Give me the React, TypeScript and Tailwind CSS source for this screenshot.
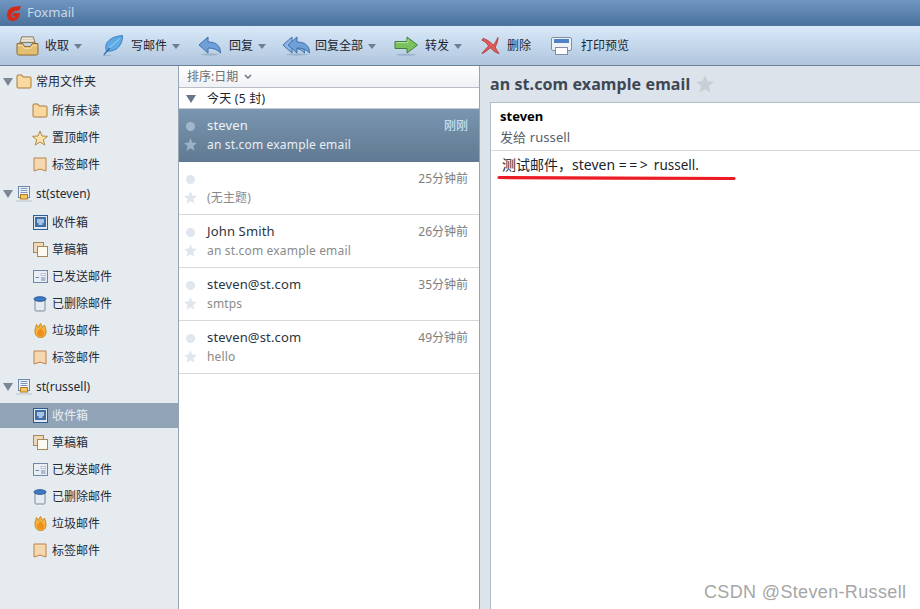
import type { ReactNode } from "react";

const font = { fontFamily: '"Noto Sans", "Noto Sans CJK SC", sans-serif' };

function InboxTrayIcon() {
  return (
    <svg width="23" height="21" viewBox="0 0 24 22">
      <path d="M4 8 L6 2 H18 L20 8Z" fill="#f6f3e8" stroke="#7d6d4a" />
      <path d="M6 4.5 H18 M5 6.5 H19" stroke="#c9c2ac" />
      <path d="M1 9 H7 L9 12 H15 L17 9 H23 V19 Q23 21 21 21 H3 Q1 21 1 19Z" fill="#e3bf74" stroke="#8a6628" />
      <path d="M2 11 H6.5 L8.5 14 H15.5 L17.5 11 H22" stroke="#f4dca6" fill="none" />
    </svg>
  );
}

function FeatherIcon() {
  return (
    <svg width="20" height="21" viewBox="0 0 20 21">
      <path d="M3.5 16 C0.5 8 7 1.5 19.5 0.5 C20 9 14 17.5 3.5 16Z" fill="#5fa9e4" stroke="#3f82c0" />
      <path d="M6 13 C9.5 10 13 7 16.5 4" stroke="#a5d6f5" fill="none" />
      <path d="M1 20 C2.5 17.5 4.5 15.5 7 13" stroke="#2f6ca8" fill="none" strokeWidth="1.3" />
      <path d="M0 20.5 H8" stroke="#9db7d1" />
    </svg>
  );
}

function ReplyIcon({ double }: { double?: boolean }) {
  const arrow = "M10 1 V6 C17 6 22.5 9 22.5 17 C19.5 13.5 15.5 12 10 12 V17 L1 9Z";
  return (
    <svg width={double ? 28 : 24} height="20" viewBox={double ? "0 0 28 20" : "0 0 24 20"}>
      <ellipse cx={double ? 15 : 12} cy="18.5" rx={double ? 11 : 9} ry="1.2" fill="#9db3ca" />
      {double && <path d={arrow} fill="#8fb6e0" stroke="#3d70ad" />}
      <g transform={double ? "translate(5 0)" : undefined}>
        <path d={arrow} fill="#6fa0d8" stroke="#3d70ad" />
      </g>
    </svg>
  );
}

function ForwardIcon() {
  return (
    <svg width="24" height="20" viewBox="0 0 24 20">
      <ellipse cx="12" cy="18.7" rx="10" ry="1" fill="#9db3ca" />
      <path d="M1 5.5 H13 V1 L23.5 9 L13 17 V12.5 H1Z" fill="#7cc15f" stroke="#3f8039" />
      <path d="M2 6.5 H14 V3.5" stroke="#b6e29d" fill="none" />
    </svg>
  );
}

function DeleteIcon() {
  return (
    <svg width="19" height="19" viewBox="0 0 20 19">
      <path d="M2 2 C7 3 11 7 13 9 C15 7 16 4 18 1 C18 5 16 9 15 11 C16 14 18 16 19 18 C15 17 12 14 10 12 C7 14 4 17 1 18 C3 15 6 12 8 10 C6 7 4 5 1 4Z" fill="#e15a55" stroke="#a83532" strokeWidth="0.8" />
    </svg>
  );
}

function PrinterIcon() {
  return (
    <svg width="21" height="18" viewBox="0 0 21 18">
      <rect x=".5" y=".5" width="20" height="13" rx="1.5" fill="#eef2f6" stroke="#7f8fa3" />
      <rect x="3" y="2" width="15" height="4" fill="#4f81c4" />
      <rect x="4.5" y="10.5" width="12" height="7" fill="#fff" stroke="#7f8fa3" />
    </svg>
  );
}

function FolderIcon() {
  return (
    <svg width="16" height="15" viewBox="0 0 16 15">
      <path d="M1 2 Q1 1 2 1 H6 L7 3 H14 Q15 3 15 4 V13 Q15 14 14 14 H2 Q1 14 1 13Z" fill="#fad9a0" stroke="#a87a3c" />
    </svg>
  );
}

function StarIcon() {
  return (
    <svg width="16" height="16" viewBox="0 0 16 16">
      <path d="M8 1 L10 6 L15.5 6.3 L11.3 9.8 L12.8 15 L8 12 L3.2 15 L4.7 9.8 L.5 6.3 L6 6Z" fill="#fbe2a8" stroke="#b08a4a" />
    </svg>
  );
}

function TagIcon() {
  return (
    <svg width="14" height="15" viewBox="0 0 14 15">
      <path d="M1 1 H13 V14 L7 12 L1 14Z" fill="#f5d7b0" stroke="#bd8246" />
    </svg>
  );
}

function AccountIcon() {
  return (
    <svg width="16" height="16" viewBox="0 0 16 16">
      <rect x="2.5" y=".5" width="11" height="11" fill="#eef3f9" stroke="#6a86ab" />
      <path d="M4.5 2.5 H11.5 M4.5 4.5 H11.5 M4.5 6.5 H11.5" stroke="#7d97b8" />
      <rect x="4.5" y="8.5" width="7" height="4.5" fill="#f6c65c" stroke="#b57f26" />
      <path d="M0 15 H16" stroke="#b9c3ce" />
    </svg>
  );
}

function InboxIcon() {
  return (
    <svg width="15" height="15" viewBox="0 0 15 15">
      <rect x=".5" y=".5" width="14" height="14" fill="#dfe7f1" stroke="#2f5d93" />
      <rect x="2" y="2" width="11" height="10" fill="#3f6fa8" />
      <path d="M4 4 H11 V8 H9.5 V10 H5.5 V8 H4Z" fill="#a9c4e3" />
    </svg>
  );
}

function DraftIcon() {
  return (
    <svg width="15" height="15" viewBox="0 0 15 15">
      <rect x=".5" y=".5" width="10" height="10" fill="#efd9b8" stroke="#a98657" />
      <rect x="4.5" y="4.5" width="10" height="10" fill="#fdf9f0" stroke="#a98657" />
    </svg>
  );
}

function SentIcon() {
  return (
    <svg width="15" height="13" viewBox="0 0 15 13">
      <rect x=".5" y=".5" width="14" height="12" fill="#e9eef5" stroke="#6f88aa" />
      <path d="M8 3.5 H12.5 V5.5 H8Z" fill="#fff" stroke="#8aa0bc" strokeWidth=".6" />
      <path d="M2.5 7.5 H6 M8 8 H12.5 M8 10 H12.5" stroke="#6f88aa" />
    </svg>
  );
}

function TrashIcon() {
  return (
    <svg width="14" height="16" viewBox="0 0 14 16">
      <path d="M2 4 V14 Q2 15 3 15 H11 Q12 15 12 14 V4Z" fill="#e6ebf1" stroke="#7d8a99" />
      <ellipse cx="7" cy="3" rx="6" ry="2.3" fill="#3f78c4" stroke="#2a5b9c" />
    </svg>
  );
}

function JunkIcon() {
  return (
    <svg width="13" height="15" viewBox="0 0 13 15">
      <path d="M1 8 C1 5 2 4 2.5 1.5 C3.5 3 4 4 4.5 4.5 C5 3 5.5 1.5 6.5 0.5 C7.5 2 8 3.5 8.5 4.5 C9 4 9.5 3 10.5 2 C11 4 12 6 12 9 C12 12.5 10 14.5 6.5 14.5 C3 14.5 1 12 1 8Z" fill="#f5b53c" stroke="#c98820" />
      <path d="M3 10 C3 8 5 7 6.5 5 C8 7 10 8 10 10 C10 12.5 8.5 13.5 6.5 13.5 C4.5 13.5 3 12.5 3 10Z" fill="#f08f1e" />
    </svg>
  );
}

function Triangle({ className }: { className: string }) {
  return (
    <svg width="10" height="8" viewBox="0 0 10 8" className={className}>
      <path d="M0 0 H10 L5 8Z" fill="currentColor" />
    </svg>
  );
}

function ToolButton({
  icon,
  label,
  caret,
  className,
  gap,
}: {
  icon: ReactNode;
  label: string;
  caret?: boolean;
  className: string;
  gap: string;
}) {
  return (
    <div className={`flex items-center ${className}`}>
      {icon}
      <span className={`${gap} text-[12px] text-[#1c2530]`}>{label}</span>
      {caret && (
        <svg width="8" height="5" viewBox="0 0 8 5" className="ml-[5px] mt-px text-[#6f7f92]">
          <path d="M0 0 H8 L4 5Z" fill="currentColor" />
        </svg>
      )}
    </div>
  );
}

function GroupRow({ icon, label }: { icon: ReactNode; label: string }) {
  return (
    <div className="flex h-[31px] items-center pl-[3px]">
      <Triangle className="text-[#7b8794]" />
      <span className="ml-[1px] flex w-[20px] justify-center">{icon}</span>
      <span className="ml-[2px] text-[12px] text-[#1f2a36]">{label}</span>
    </div>
  );
}

function FolderRow({ icon, label, active }: { icon: ReactNode; label: string; active?: boolean }) {
  return (
    <div className="h-[27px] py-px">
      <div className={`flex h-[25px] items-center pl-[32px] ${active ? "bg-[#91a4b7] text-[#e8eef4]" : "text-[#1f2a36]"}`}>
        <span className="flex w-[16px] justify-center">{icon}</span>
        <span className="ml-[4px] text-[12px]">{label}</span>
      </div>
    </div>
  );
}

const accountFolders = (activeInbox: boolean) => (
  <>
    <FolderRow icon={<InboxIcon />} label="收件箱" active={activeInbox} />
    <FolderRow icon={<DraftIcon />} label="草稿箱" />
    <FolderRow icon={<SentIcon />} label="已发送邮件" />
    <FolderRow icon={<TrashIcon />} label="已删除邮件" />
    <FolderRow icon={<JunkIcon />} label="垃圾邮件" />
    <FolderRow icon={<TagIcon />} label="标签邮件" />
  </>
);

const mails = [
  { from: "steven", subject: "an st.com example email", time: "刚刚", selected: true },
  { from: "", subject: "(无主题)", time: "25分钟前" },
  { from: "John Smith", subject: "an st.com example email", time: "26分钟前" },
  { from: "steven@st.com", subject: "smtps", time: "35分钟前" },
  { from: "steven@st.com", subject: "hello", time: "49分钟前" },
];

function MailRow({ from, subject, time, selected }: { from: string; subject: string; time: string; selected?: boolean }) {
  return (
    <div
      className={`h-[53px] pl-[5px] pr-[11px] pt-[7px] ${
        selected ? "bg-gradient-to-b from-[#7a95b0] to-[#617a92]" : "border-b border-[#d8d8d8] bg-white"
      }`}
    >
      <div className="flex h-[20px] items-center">
        <span className={`ml-[2px] h-[9px] w-[9px] rounded-full ${selected ? "bg-[#a4b7ca]" : "bg-[#dfe6ee]"}`} />
        <span className={`ml-[12px] flex-1 text-[13px] tracking-[0.15px] ${selected ? "text-[#eef3f7]" : "text-[#2b3440]"}`}>{from}</span>
        <span className={`text-[12px] ${selected ? "text-[#dfe9f2]" : "text-[#7d7d7d]"}`}>{time}</span>
      </div>
      <div className="-mt-px flex h-[19px] items-center">
        <svg width="13" height="13" viewBox="0 0 16 16" className={selected ? "text-[#9db1c5]" : "text-[#dfe6ee]"}>
          <path d="M8 0 L10.2 5.6 L16 6 L11.5 9.8 L13 15.8 L8 12.5 L3 15.8 L4.5 9.8 L0 6 L5.8 5.6Z" fill="currentColor" />
        </svg>
        <span className={`ml-[10px] text-[12px] tracking-[0.17px] ${selected ? "text-[#e9eff5]" : "text-[#8a8a8a]"}`}>{subject}</span>
      </div>
    </div>
  );
}

export default function App() {
  return (
    <div className="relative flex h-[609px] w-[920px] flex-col overflow-hidden bg-white" style={font}>
      <header className="flex h-[26px] items-center bg-gradient-to-b from-[#6f97c2] to-[#49719c] pl-[7px]">
        <svg width="14" height="15" viewBox="0 0 14 15">
          <path d="M14 0 L9 .5 C3.5 1 0 4 0 9 C0 12.8 2.3 15 6 15 C10 15 12 12.3 13 7 H6.5 L5 10.2 H8.3 C8 11.2 7.3 11.6 6.5 11.6 C5.3 11.6 4.6 10.6 4.6 9.2 C4.6 6.8 7 5 10.5 4.6 H12.3Z" fill="#d42a18" />
        </svg>
        <span className="ml-[6px] text-[13px] text-[#c9d8e8]">Foxmail</span>
      </header>

      <div className="flex h-[40px] items-center border-b border-[#6d7f92] bg-gradient-to-b from-[#d9e9f9] to-[#b0c6de] pl-[16px]">
        <ToolButton icon={<InboxTrayIcon />} label="收取" caret gap="ml-[6px]" className="w-[87px]" />
        <ToolButton icon={<FeatherIcon />} label="写邮件" caret gap="ml-[8px]" className="w-[95px]" />
        <ToolButton icon={<ReplyIcon />} label="回复" caret gap="ml-[7px]" className="w-[84px]" />
        <ToolButton icon={<ReplyIcon double />} label="回复全部" caret gap="ml-[5px]" className="w-[112px]" />
        <ToolButton icon={<ForwardIcon />} label="转发" caret gap="ml-[7px]" className="w-[87px]" />
        <ToolButton icon={<DeleteIcon />} label="删除" gap="ml-[7px]" className="w-[70px]" />
        <ToolButton icon={<PrinterIcon />} label="打印预览" gap="ml-[9px]" className="w-[90px]" />
      </div>

      <div className="flex min-h-0 flex-1">
        <aside className="w-[179px] shrink-0 border-r border-[#98a4b0] bg-[#e6ebf0]">
          <GroupRow icon={<FolderIcon />} label="常用文件夹" />
          <FolderRow icon={<FolderIcon />} label="所有未读" />
          <FolderRow icon={<StarIcon />} label="置顶邮件" />
          <FolderRow icon={<TagIcon />} label="标签邮件" />
          <GroupRow icon={<AccountIcon />} label="st(steven)" />
          {accountFolders(false)}
          <GroupRow icon={<AccountIcon />} label="st(russell)" />
          {accountFolders(true)}
        </aside>

        <section className="w-[301px] shrink-0 border-r border-[#98a4b0] bg-white">
          <div className="flex h-[22px] items-center border-b border-[#b8bfc6] bg-gradient-to-b from-white to-[#eef1f5] pl-[8px]">
            <span className="text-[12px] text-[#6f6f6f]">排序:日期</span>
            <svg width="8" height="6" viewBox="0 0 8 6" className="ml-[6px]">
              <path d="M1 1 L4 4 L7 1" fill="none" stroke="#5f6b78" strokeWidth="1.4" />
            </svg>
          </div>
          <div className="flex h-[21px] items-center border-b border-[#c6ccd3] pl-[7px] pt-px">
            <Triangle className="text-[#66778a]" />
            <span className="ml-[11px] text-[12px] tracking-[0.25px] text-[#1a222b]">今天 (5 封)</span>
          </div>
          {mails.map((mail, i) => (
            <MailRow key={i} {...mail} />
          ))}
        </section>

        <main className="min-w-0 flex-1 bg-[#dce3ea] pl-[10px]">
          <div className="flex h-[36px] items-center">
            <h1 className="text-[16px] tracking-[0.09px] font-bold text-[#3e4854]">an st.com example email</h1>
            <svg width="18" height="18" viewBox="0 0 16 16" className="ml-[6px] text-[#c8ced6]">
              <path d="M8 0 L10.2 5.6 L16 6 L11.5 9.8 L13 15.8 L8 12.5 L3 15.8 L4.5 9.8 L0 6 L5.8 5.6Z" fill="currentColor" />
            </svg>
          </div>
          <div className="relative h-[507px] border-l border-t border-[#b4bcc5] bg-white">
            <div className="h-[48px] border-b border-[#d8d8d8] pl-[9px] pt-[3px]">
              <p className="text-[13px] leading-[20px] font-bold text-black">steven</p>
              <p className="mt-px text-[13px] leading-[20px] tracking-[0.1px] text-[#56606c]">发给 russell</p>
            </div>
            <p className="pl-[11px] pt-[3px] text-[14px] leading-[22px] text-[#1a222b]">
              测试邮件{"\uFF0C"}steven <span className="tracking-[2.5px]">==&gt;</span>{" "}
              <span className="text-[13.5px]">russell.</span>
            </p>
            <svg width="240" height="6" viewBox="0 0 240 6" className="absolute left-[6px] top-[72px]">
              <path d="M2 2.5 C60 3 180 3.5 237 3.5" fill="none" stroke="#ec1c24" strokeWidth="3.2" strokeLinecap="round" />
            </svg>
          </div>
        </main>
      </div>

      <span
        className="absolute left-[704px] top-[580px] text-[18px] leading-[24px] tracking-[0.35px] text-[#a6a6a6]"
        style={{ fontFamily: '"Liberation Sans", sans-serif' }}
      >
        CSDN @Steven-Russell
      </span>
    </div>
  );
}
